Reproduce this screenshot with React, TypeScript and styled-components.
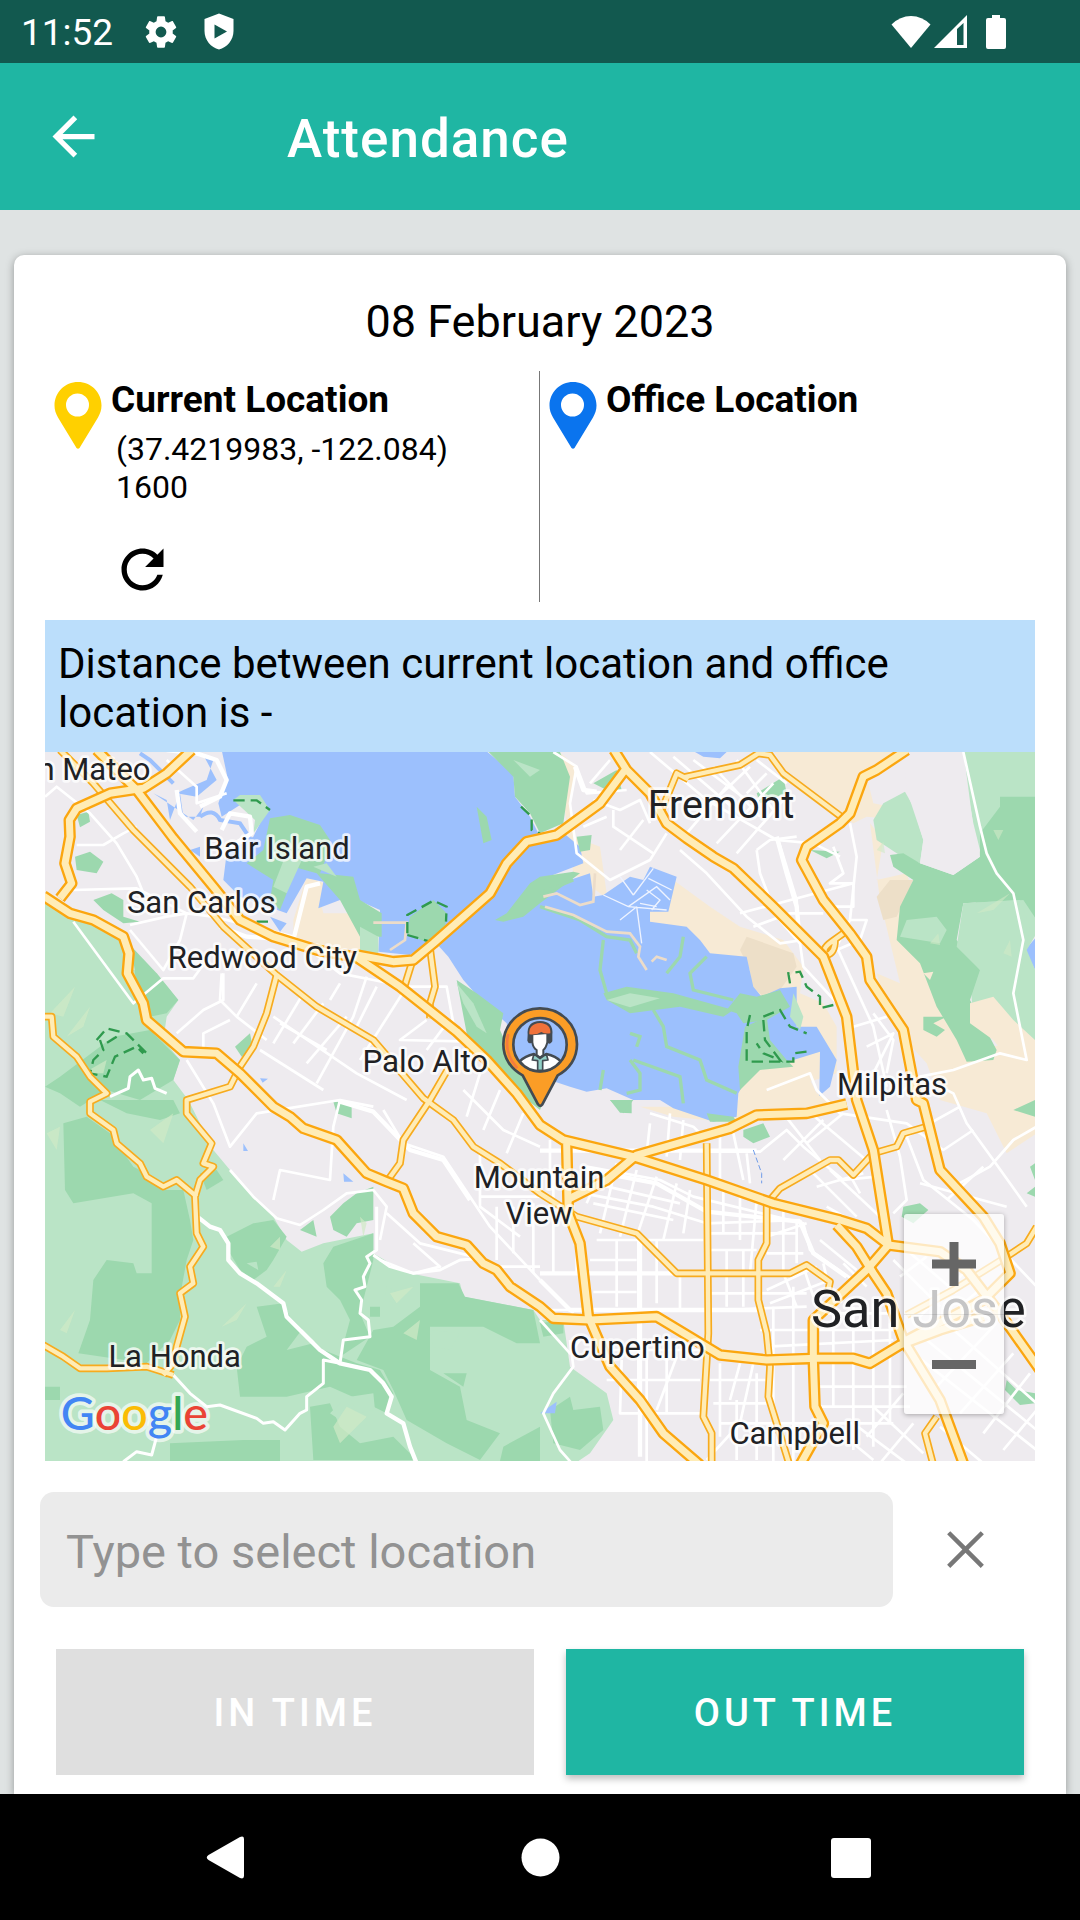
import React, { useState } from "react";
import styled, { createGlobalStyle } from "styled-components";

const GlobalStyle = createGlobalStyle`
  *, *::before, *::after { box-sizing: border-box; }
  body {
    margin: 0;
    background: #dfe3e3;
    font-family: Roboto, "Noto Sans", "Liberation Sans", sans-serif;
    color: #000;
  }
  button, input { font-family: inherit; }
`;

const Screen = styled.div`
  min-height: 100vh;
  display: flex;
  flex-direction: column;
`;

const StatusBar = styled.div`
  height: 63px;
  padding: 0 74px 0 21px;
  display: flex;
  align-items: center;
  justify-content: space-between;
  background: #12594f;
  color: #fff;
`;

const StatusGroup = styled.div<{ $gap: number }>`
  display: flex;
  align-items: center;
  gap: ${(p) => p.$gap}px;
`;

const Clock = styled.span`
  font-size: 37px;
  line-height: 44px;
  margin-right: 5px;
  padding-top: 2px;
`;

const AppBar = styled.header`
  height: 147px;
  padding: 0 42px;
  display: flex;
  align-items: center;
  gap: 182px;
  background: #1fb6a3;
  color: #fff;
`;

const Title = styled.h1`
  margin: 0;
  padding-top: 4px;
  font-size: 53px;
  line-height: 64px;
  font-weight: 500;
  letter-spacing: 1px;
`;

const IconButton = styled.button<{ $color: string }>`
  width: 63px;
  height: 63px;
  padding: 0;
  border: 0;
  background: none;
  color: ${(p) => p.$color};
  display: block;
  cursor: pointer;
  svg { display: block; }
`;

const Main = styled.main`
  flex: 1;
  display: flex;
  padding: 45px 14px 0;
  overflow: hidden;
`;

const Card = styled.section`
  flex: 1;
  min-width: 0;
  padding: 39px 31px 19px;
  background: #fff;
  border-radius: 10px 10px 0 0;
  box-shadow: 0 2px 8px rgba(0, 0, 0, 0.34);
`;

const DateHeading = styled.h2`
  margin: 0 0 21px;
  font-size: 45px;
  line-height: 56px;
  font-weight: 400;
  text-align: center;
`;

const Locations = styled.div`
  display: grid;
  grid-template-columns: 1fr 1fr;
  height: 231px;
`;

const LocationPanel = styled.div`
  display: flex;
  align-items: flex-start;
  gap: 9px;
  padding: 11px 0 0 9px;
  &:first-child { border-right: 1px solid #777; }
  > svg { flex: none; }
`;

const LocationBody = styled.div`
  display: flex;
  flex-direction: column;
  align-items: flex-start;
`;

const LocationTitle = styled.h3`
  margin: 0 0 12px;
  font-size: 37px;
  line-height: 36px;
  font-weight: 700;
`;

const LocationText = styled.p`
  margin: 0 0 32px;
  padding-left: 5px;
  font-size: 32px;
  line-height: 38px;
`;

const Distance = styled.p`
  margin: 18px 0 0;
  padding: 19px 13px 15px;
  background: #bbdefb;
  font-size: 42px;
  line-height: 49px;
`;

const MapFrame = styled.div`
  position: relative;
  overflow: hidden;
  > svg { display: block; width: 100%; height: auto; }
`;

const MapLabel = styled.text`
  font-family: Roboto, "Noto Sans", sans-serif;
  fill: #202124;
  stroke: rgba(255, 255, 255, 0.75);
  stroke-width: 16px;
  stroke-linejoin: round;
  paint-order: stroke;
  text-anchor: middle;
`;

const GoogleMark = styled.text`
  font-family: Lato, "Open Sans", sans-serif;
  font-size: 140px;
  font-weight: 500;
  stroke: rgba(255, 255, 255, 0.65);
  stroke-width: 22px;
  stroke-linejoin: round;
  paint-order: stroke;
`;

const ZoomControl = styled.div`
  position: absolute;
  right: 31px;
  bottom: 47px;
  width: 100px;
  background: rgba(255, 255, 255, 0.74);
  border-radius: 3px;
  box-shadow: 0 1px 5px rgba(0, 0, 0, 0.3);
`;

const ZoomButton = styled.button`
  width: 100%;
  height: 100px;
  padding: 0;
  border: 0;
  background: none;
  display: grid;
  place-items: center;
  color: #666;
  cursor: pointer;
  & + & { border-top: 1px solid rgba(0, 0, 0, 0.08); }
`;

const SearchRow = styled.div`
  display: flex;
  align-items: center;
  gap: 41px;
  margin: 31px 38px 42px -5px;
`;

const SearchInput = styled.input`
  flex: 1;
  min-width: 0;
  height: 115px;
  padding: 4px 26px 0;
  border: 0;
  border-radius: 14px;
  background: #ebebeb;
  color: #222;
  font-size: 47px;
  &::placeholder { color: #929292; opacity: 1; }
`;

const Actions = styled.div`
  display: grid;
  grid-template-columns: 478fr 458fr;
  gap: 32px;
  padding: 0 11px;
`;

const ActionButton = styled.button`
  height: 126px;
  border: 0;
  padding: 2px 0 0;
  background: #1fb6a3;
  color: #fff;
  font-size: 38px;
  font-weight: 500;
  letter-spacing: 4px;
  box-shadow: 0 4px 7px rgba(0, 0, 0, 0.25);
  cursor: pointer;
  &:disabled {
    background: #dfdfdf;
    box-shadow: none;
    cursor: default;
  }
`;

const NavBar = styled.nav`
  height: 126px;
  padding: 0 194px;
  display: flex;
  align-items: center;
  justify-content: space-between;
  background: #000;
  z-index: 1;
`;

const Pin = ({ color }: { color: string }) => (
  <svg width="48" height="67" viewBox="0 0 48 67" aria-hidden="true">
    <path
      fill={color}
      fillRule="evenodd"
      d="M24 0C11 0 .5 10.400.5 23.500c0 4.500 1.300 8 3.500 12L22.500 66q1.500 1.500 3 0L44 35.500c2.200-4 3.500-7.500 3.500-12C47.500 10.400 37 0 24 0zm-.5 11.500a11.500 11.500 0 1 1 0 23 11.500 11.500 0 0 1 0-23z"
    />
  </svg>
);

const GlyphIcon = ({ d }: { d: string }) => (
  <svg width="63" height="63" viewBox="0 0 24 24" fill="currentColor" aria-hidden="true">
    <path d={d} />
  </svg>
);

const BACK = "M20 11H7.830l5.590-5.590L12 4l-8 8 8 8 1.410-1.410L7.830 13H20v-2z";
const REFRESH =
  "M17.650 6.350C16.200 4.900 14.210 4 12 4c-4.420 0-7.990 3.580-7.990 8s3.570 8 7.990 8c3.730 0 6.840-2.550 7.730-6h-2.080c-.82 2.330-3.040 4-5.650 4-3.310 0-6-2.690-6-6s2.690-6 6-6c1.660 0 3.140.69 4.220 1.780L13 11h7V4l-2.350 2.350z";
const CLOSE =
  "M19 6.200 17.800 5 12 10.800 6.200 5 5 6.200 10.800 12 5 17.800 6.200 19 12 13.200 17.800 19 19 17.800 13.200 12z";

/* Map artwork, drawn on a 2970 x 2127 sheet. */
const HIGHWAYS = [
  "M170 30L290 150L400 295L520 440L600 540L700 590L830 630L950 652L1080 740L1250 875L1340 960L1430 1060L1500 1155L1570 1200L1780 1250L2000 1320L2200 1390L2400 1440L2480 1465L2545 1515L2700 1535L2780 1590L2880 1720L3000 1890",
  "M455 30L380 100L310 145L210 160L110 205L88 240L90 290L75 370L95 430L60 475",
  "M10 468L90 520L160 540L250 590L267 640L262 700L310 790L320 840L430 935L530 940L600 1000L700 1100L750 1130L790 1165L890 1200L980 1300L1040 1325L1090 1345L1120 1420L1190 1490L1280 1515L1330 1570L1370 1590L1410 1640L1500 1700L1540 1735L1650 1740L1850 1730L2040 1845L2180 1860L2330 1855L2440 1855L2490 1870L2580 1815L2700 1770L2830 1730",
  "M950 645L1060 665L1120 660L1180 610L1350 460L1400 370L1460 305L1550 285L1680 190L1755 90",
  "M1722 30L1760 90L1830 160L1880 250L1940 295L2020 350L2080 385L2200 500L2350 650L2420 830L2450 1080L2500 1230L2545 1515L2480 1590L2320 1740L2320 1860L2325 2000L2350 2050L2280 2175",
  "M2600 30L2510 90L2470 110L2430 220L2400 250L2300 320L2285 360L2350 480L2430 580L2480 650L2490 720L2590 870L2630 1080L2650 1090L2700 1290L2830 1430L2880 1510L2910 1600L2830 1680L2600 1800",
  "M2420 1092L2300 1120L2150 1125L2070 1165L1790 1245L1700 1320L1580 1380",
  "M1580 1210L1585 1420L1620 1510L1645 1730L1710 1880L1800 1980L1870 2080L1980 2175",
  "M2390 1455L2450 1520L2500 1600L2540 1660L2590 1800L2700 1980L2770 2170",
];
const ROADS = [
  "M60 30L160 130L280 270L450 440L550 560L710 705L830 800L1000 900L1150 1075L1240 1140L1300 1220L1380 1270L1500 1360L1610 1430L1790 1480L1910 1600L2250 1600L2300 1575L2370 1625L2365 1650",
  "M1930 112L2100 75L2155 40L2190 45L2230 100L2410 235",
  "M1865 210L1910 100L1945 118",
  "M2410 580L2375 605Q2340 630 2360 645Q2385 640 2385 600",
  "M710 705L680 820L640 920L600 980L570 1040L440 1080L440 1120L515 1210L490 1270L520 1280L480 1320L465 1370L470 1480L490 1520L450 1580L460 1630L420 1660L435 1730L410 1820L400 1870L370 1905",
  "M10 830L35 830L40 890L110 950L150 1010L200 1060L150 1085L150 1120L220 1170L230 1210L300 1270L320 1310L370 1340L410 1320L470 1370",
  "M10 1815L70 1850L120 1885L200 1885L320 1880L400 1905",
  "M1115 670L1090 750",
  "M1170 625L1185 740L1170 790L1170 835",
  "M1225 985L1170 1080L1090 1200L1080 1270L1040 1325",
  "M2000 1210L2005 1780L1990 2030L2015 2080L2015 2180",
  "M2180 1385L2180 1510L2155 1560L2155 1680L2180 1780L2190 1880L2185 1970L2210 2050L2250 2180",
  "M2190 1380L2220 1345L2370 1260L2395 1260L2440 1305L2500 1240L2570 1220L2590 1180L2660 1160",
  "M2600 1725L2740 1650L2900 1550L2960 1510L2990 1460",
  "M2690 2030L2655 2080L2680 2175",
];
const STREETS = [
  "M15 170L50 140L150 220L230 310L290 410L310 460",
  "M110 315L190 315L250 280L290 260",
  "M100 450L290 445L440 520L520 530",
  "M380 60L470 140L470 190L560 160",
  "M100 545L280 790L370 715L460 715L500 660",
  "M270 555L380 530L440 520L420 600L370 690L270 570",
  "M520 530L760 590L900 700L1000 720L1100 740L1220 740L1240 850",
  "M545 700L540 780L590 830L680 900M650 730L590 830M700 830L950 1000L1100 1080",
  "M790 760L700 910M850 790L760 910M920 830L800 970M980 710L940 830L830 1030M1010 740L950 860M900 730L870 780",
  "M720 850L860 930M660 930L850 1050M1100 740L960 960M1160 840L1080 900L1300 905M1220 850L1160 930",
  "M410 880L490 810L550 780L550 700M490 940L490 880L570 840",
  "M440 960L520 1090L570 1220L650 1120L900 1080L880 1160L870 1320L720 1290L700 1380",
  "M570 1290L640 1370L710 1435L780 1455L850 1410L920 1360L1000 1350L1040 1400L1020 1500",
  "M1000 1100L900 1080M1030 1110L1090 1210L1210 1250L1350 1460L1500 1620M1040 1420L1140 1510L1300 1550",
  "M1120 1510L1200 1580L1120 1600L1020 1560M1270 1050L1390 1170L1500 1220M1320 1000L1280 1130M1380 1050L1330 1170M1450 1120L1400 1240",
  "M1320 1240L1320 1400L1440 1490M1320 1370H1500M1370 1400V1560M1420 1400V1540M1480 1390V1600M1340 1580H1500",
  "M1540 36L1610 80L1640 160L1760 150M1610 80L1590 190L1610 340L1710 420L1830 360L1880 280",
  "M1710 60L1650 130M1660 180L1740 210L1800 180L1830 250M1720 210L1720 260L1840 340M1740 330L1810 240M1630 260L1700 230",
  "M1830 36L2000 180L2210 300L2320 310L2400 350M1900 50L2110 230M1960 60L2120 180M2020 80L2160 230M2090 60L2200 210M2150 60L2240 130",
  "M2120 160L2180 100M1960 240L2130 80M1940 280L2060 140M2030 310L2200 130M2090 340L2230 180",
  "M2150 330L2190 300L2270 290M2150 330L2160 400L2210 530L2280 610L2290 680L2410 810M2215 300L2270 480L2280 600",
  "M1920 330L2000 400L2120 530L2220 610L2290 600M2100 520L2440 430M2140 560L2250 520L2350 520M2380 320L2410 400L2370 430L2440 430L2440 500L2360 500",
  "M2430 250L2450 350L2430 540L2390 620L2500 860L2540 1040M2430 540L2480 540L2460 600L2390 630M2440 860L2540 830M2480 920L2560 880L2500 1000M2500 820L2560 900L2540 1000",
  "M2770 36L2820 260L2840 340L2870 400L2920 460L2950 600L2920 760L2960 960L2880 940L2740 990L2640 1010L2580 1060",
  "M2180 1050L2310 1000L2330 1050L2400 1120L2600 1150L2710 1230L2800 1170",
  "M2640 1010L2740 1060L2780 1150L2860 1260L2960 1400M2990 1160L2920 1200L2850 1280L2740 1340M2760 1100L2580 1200M2640 1330L2900 1400",
  "M2600 1190L2650 1320L2800 1440L2990 1640M2540 1110L2580 1250L2600 1380L2560 1420M2830 1280L2720 1380",
  "M1500 1600H1900M1500 1710H2050L2300 1700M1530 1200V1320M1540 1300L1540 1600M1500 1620L1600 1720M1610 1500V1600",
  "M1660 1656H1790M1670 1500H1990M1650 1560H1790M1795 1490V1980M1730 1500V1700M1850 1500V1690",
  "M1920 1610V1710M1880 1830V2020M1820 1820V2170M1745 1860L1740 2020H2000M1690 1830H1990M1700 1920H1980M1910 1850L1850 2010",
  "M1640 1280L1860 1320L1960 1370L2290 1450L2310 1530L2440 1620M1630 1360L1840 1400L2000 1450L2280 1440",
  "M1730 1270L1680 1480M1790 1290L1740 1490M1850 1310L1790 1490M1910 1330L1870 1500M1950 1350L1930 1480M1680 1300L1640 1390",
  "M1660 1330L1920 1390M1660 1390L1900 1440M1830 1150L1820 1240M1830 1120L1960 1160L2000 1200M1890 1120L1880 1250M1930 1140L1920 1260",
  "M2010 1235H2160L2240 1170L2290 1220L2410 1320L2510 1310M2040 1180V1320M2080 1180L2110 1320M2120 1240L2130 1330",
  "M2230 1120L2340 1260M2300 1110L2490 1270M2350 1140L2230 1260M2410 1120L2300 1210M2370 1290L2520 1430M2410 1270L2460 1360M2320 1300L2450 1430M2330 1340L2470 1300",
  "M2020 1340L2150 1380L2130 1600M2050 1350V1480M2100 1360V1500M2010 1480H2270M2010 1530H2150M2060 1530V1700M2110 1530V1700M2010 1660H2300",
  "M2230 1390V1600M2270 1440V1570M2180 1490L2300 1450M2180 1540H2290M2200 1700V2170M2260 1640V2170M2160 1770H2590M2180 1820L2560 1800M2380 1710V2000M2440 1700V2130M2500 1690V2120M2550 1750V2050",
  "M2180 1650L2330 1580M2190 1690L2370 1620M2230 1600L2270 1700M2290 1580L2320 1670M2350 1570L2380 1700M2360 1720H2580",
  "M2040 1870V2090M2100 1870L2070 1980M2140 1870L2100 2050L2000 2160M2010 1920H2180M2020 1990H2180M2040 2050H2560M2090 1980V2160M2150 1900V2160",
  "M2330 1940H2600M2330 2000H2610M2380 2060L2500 2160M2440 2050L2600 2170M2500 2000L2650 2140M2590 1960L2480 2090M2620 2050L2520 2170",
  "M2620 1840L2990 2130M2660 1800L2990 2070M2730 1760L2990 1990M2690 1940L2860 1760M2760 2020L2920 1840M2830 2080L2970 1900M2890 2130L2990 2010M2700 2060L2830 2170",
  "M2560 1560L2700 1700M2600 1530L2750 1660M2640 1730L2770 1600M2710 1740L2830 1640M2580 1610L2660 1550M2500 1480L2360 1400M2450 1590L2340 1500M2480 1640L2410 1570",
  "M1590 1800L1600 1880L1540 1960L1510 2020L1560 2130L1600 2175M1500 1740L1590 1840L1620 1800",
];
const LABELS: Array<[string, number, number, number]> = [
  ["n Mateo", 162, 120, 93],
  ["Bair Island", 711, 357, 93],
  ["San Carlos", 484, 520, 93],
  ["Redwood City", 667, 683, 93],
  ["Palo Alto", 1156, 997, 94],
  ["Fremont", 2043, 235, 118],
  ["Milpitas", 2556, 1065, 93],
  ["Mountain", 1497, 1343, 93],
  ["View", 1497, 1453, 93],
  ["La Honda", 404, 1880, 93],
  ["Cupertino", 1792, 1853, 93],
  ["Campbell", 2264, 2112, 93],
  ["San Jose", 2635, 1762, 157],
];

const LIGHT = "#bae4c6";
const DARK = "#9cd8ae";
const WATER = "#9cc0fd";
const SAND = "#f7ead5";

const MapArt = () => (
  <svg viewBox="15 36 2970 2127" role="img" aria-label="Map of the southern San Francisco Bay">
    <rect x="0" y="0" width="3000" height="2200" fill="#eeebef" />

    {/* sand and salt flats */}
    <g fill={SAND}>
      <path d="M1550 30L1610 80L1590 180L1600 290L1680 320L1700 460L1900 420L2010 500L2100 560L2230 600L2290 680L2280 760L2350 790L2390 860L2390 1000L2100 1090L2000 700L1600 400Z" />
      <path d="M2200 30H2570L2480 110L2500 190L2600 210L2590 240L2480 230L2440 250L2330 170L2230 80Z" />
      <path d="M2490 250L2530 300L2510 420L2600 400L2640 520L2680 640L2720 800L2780 930L2990 900V1180L2900 1240L2840 1120L2700 1080L2660 970L2560 860L2510 700L2580 730L2520 480Z" />
      <path d="M800 410L850 430L890 450L840 480L850 520L960 520L960 630L760 610L760 540Z" />
      <path d="M2070 1100L2130 1050L2300 1000L2330 1060L2390 1090L2250 1110L2090 1150L1900 1130L1800 1100Z" />
    </g>
    <path fill="#eddfc8" d="M2120 590L2260 640L2270 680L2220 750L2165 765L2135 740L2130 690L2100 630ZM2550 420L2620 420L2570 530L2530 540L2510 470Z" />

    {/* bay */}
    <path
      fill={WATER}
      d="M545 30L562 110L535 190L545 230L600 195L665 240L640 290L560 340L550 420L600 470L740 520L800 415L850 425L835 505L900 480L940 475L1020 510L1015 635L1110 645L1180 600L1225 650L1270 720L1310 765L1350 805L1400 850L1420 960L1500 1010L1590 1040L1640 1055L1700 1045L1780 1080L1860 1080L1900 1105L2020 1145L2090 1130L2095 1060L2140 980L2260 960L2340 935L2338 1068L2370 1040L2390 960L2330 860L2270 860L2270 740L2220 745L2165 770L2140 740L2120 650L2010 640L1980 600L1940 560L1830 545L1830 515L1885 515L1910 410L1830 380L1810 420L1770 410L1690 465L1660 470L1650 400L1560 430L1500 455L1500 420L1630 370L1620 320L1560 270L1500 290L1470 230L1425 170L1420 100L1335 30Z"
    />
    <path fill={WATER} d="M15 500L40 540L70 540L110 590L140 620L138 660L90 640L50 600ZM1965 36H2060L2040 55L1990 50ZM430 150L500 120L520 60L490 45L530 120L470 170L410 160ZM340 160L380 180L390 240L420 160L430 230L480 230L490 200L460 240ZM450 330L480 320L480 350ZM690 530L740 550L720 575ZM910 1300L940 1325H912ZM610 1210L624 1233H610ZM660 1015L684 1016L668 1028Z" />
    <path d="M480 230Q520 200 540 240L600 250L640 310M300 40L330 60L400 130" fill="none" stroke={WATER} strokeWidth="12" />

    {/* islands and marsh */}
    <g fill={DARK}>
      <path d="M690 235L750 225L840 255L870 300L860 350L840 400L940 410L960 480L1025 520V590L960 590L900 480L830 400L760 380L740 460L720 510L690 480L700 420L620 370L670 330Z" />
      <path d="M1340 30L1560 36L1590 110L1570 250L1500 280L1470 220L1425 170L1420 110Z" />
      <path d="M1500 410L1470 430L1400 520L1365 540L1390 545L1450 530L1500 490L1620 400L1600 395Z" />
      <path d="M1110 530L1180 480L1220 520L1215 560L1170 610L1130 595L1100 580Z" />
      <path d="M1310 200L1340 230L1355 300L1330 310Z" />
      <path d="M1250 720L1310 760L1390 820L1380 870L1420 960L1450 1010L1520 1060L1500 1110L1400 1030L1340 960L1280 880Z" />
      <path d="M1690 760L1760 740L1900 760L2080 810L2050 830L1920 800L1770 820L1700 780ZM2060 810L2100 760L2150 770L2220 750L2250 800L2180 840L2110 850L2090 820Z" />
      <path d="M2115 860L2180 830L2190 900L2240 960L2260 980L2160 990L2100 1050L2095 980Z" />
      <path d="M2000 1120L2080 1130L2090 1145H2010ZM1710 1080H1775V1120L1740 1118ZM2110 1170L2170 1150L2190 1190L2140 1210L2110 1190Z" />
      <path d="M1660 130L1730 90L1745 150L1700 150ZM2150 160L2230 110L2240 160L2160 190ZM2310 330L2400 335L2360 355ZM1610 290L1655 285L1650 330L1620 335Z" />
      <path d="M110 225L145 215L150 245L120 262ZM105 350L150 335L190 365L170 400L110 390ZM160 480L215 460L250 480L250 530L300 545L250 550L190 510ZM585 920L630 880L640 930L605 950Z" />
      <path d="M2590 1400L2640 1390L2665 1410L2620 1450L2585 1430ZM2900 1920L2930 1950L2985 1960V1990L2940 1995L2895 1950Z" />
    </g>
    <g fill={LIGHT}>
      <path d="M600 165L660 165L690 210L640 280L645 240L580 180ZM735 350L790 350L740 460L700 440ZM820 380L860 370L890 410ZM1700 780L1770 760L1860 775L1770 802ZM960 560L1015 590V640L960 635ZM2260 760L2290 830L2280 870L2250 830ZM1420 60L1500 90L1470 110Z" />
      <path d="M1250 730L1300 790L1340 880L1310 860L1270 790Z" />
    </g>
    <g fill="none" stroke={DARK} strokeWidth="10">
      <path d="M1500 500L1620 540L1700 590L1770 600L1790 640" />
      <path d="M1690 600L1680 690L1700 760M1840 810L1870 860L1880 920L1980 960L2000 1020L2090 1060M1770 960L1800 1000L1800 1050L1760 1060M1690 990L1680 1050M1930 590L1920 650L1880 700M2000 650L1950 700L1960 750L2080 780M1780 960L1920 1010L1930 1090M1770 880L1800 890L1790 920M1500 460L1600 420" />
    </g>
    <g fill="none" stroke="#ecdcc9" strokeWidth="8">
      <path d="M1510 470L1550 460L1620 495L1660 485L1665 400M1515 500L1600 525L1700 575L1770 580L1800 620L1795 650L1820 690M1835 665L1850 650L1880 660M1000 548H1100L1095 600L1050 630" />
    </g>
    <g fill="none" stroke="#eef3ff" strokeWidth="4">
      <path d="M1690 465L1765 500L1880 510M1780 465L1740 410M1780 465L1840 385M1765 500L1850 440L1890 480M1790 500L1805 610M1820 450L1860 480L1835 510M1825 415L1895 450M1800 490L1850 500M1740 540L1790 500" />
    </g>

    {/* western hills */}
    <path fill={LIGHT} d="M0 480L130 520L250 600L280 690L350 700L415 780L380 830L370 900L420 960L400 1020L445 1080L520 1230L620 1350L700 1430L740 1500L785 1535L850 1510L1000 1480L1000 1540L1050 1570L1110 1600L1260 1630L1270 1670L1480 1710L1500 1740L1570 1740L1590 1880L1700 1960L1720 2040L1650 2140L1590 2180H0Z" />
    <g fill={DARK}>
      <path d="M275 620L350 700L415 780L380 820L330 830L290 740Z" />
      <path d="M15 1040L60 1010L140 950L220 890L330 870L420 960L400 1020L300 1080L200 1050L120 1100L60 1060Z" />
      <path d="M70 1150L140 1130L210 1180L280 1280L340 1310L370 1350L430 1350L450 1440L460 1500L440 1560L420 1670L420 1740L390 1800L320 1870L115 1840L150 1740L160 1620L200 1560L280 1570L290 1600L335 1600L335 1390L280 1360L100 1390L75 1350Z" />
      <path d="M180 1080L400 1080L420 1120L360 1140L260 1120ZM480 1300L530 1290L550 1320L500 1350Z" />
      <path d="M560 1490L640 1450L700 1440L740 1490L700 1560L680 1590L640 1620L600 1590L570 1540Z" />
      <path d="M850 1570L880 1520L1000 1480V1560L980 1640L960 1720L990 1790L900 1850L930 1740L900 1680L860 1640Z" />
      <path d="M650 1700L730 1690L750 1730L850 1830L950 1870L1020 1890L1060 1960L1040 2020L960 1980L870 1940L740 1970L600 1970L590 1880L620 1820L680 1790Z" />
      <path d="M1000 1770L1060 1760L1140 1700V1630H1255L1275 1670L1480 1710L1500 1810L1430 1810L1330 1760L1170 1760L1170 1890L1260 1940L1280 2040L1380 2080L1320 2160L1220 2110L1100 2040L1060 1950L1030 1890L950 1860Z" />
      <path d="M390 2110L610 2100L720 2100L720 2170H390ZM810 2000L870 1990L900 2060L960 2110L1060 2090L1130 2160H820Z" />
      <path d="M870 1430L910 1390L950 1360L1000 1340L1000 1440L950 1450L920 1490L880 1470ZM780 1470L820 1440L830 1490Z" />
      <path d="M1530 2010L1590 1970L1600 2010L1680 2000L1690 2070L1620 2130L1540 2110ZM1500 1750L1570 1740V1780L1510 1790ZM1710 1080H1780L1750 1120ZM880 1085H935V1135L890 1120Z" />
      <path d="M990 1700H1020V1730H990ZM1390 2120L1500 2060V2163H1380ZM1270 1940L1210 1900H1280ZM15 1940H60V1980H15Z" />
    </g>
    <path fill={LIGHT} d="M740 1830L800 1750L835 1790L820 1810ZM930 1970L1000 1960L1005 2010L950 2020ZM620 1570L650 1565L655 1590ZM1040 1640L1080 1660L1070 1690L1035 1680ZM1170 1770L1260 1780L1230 1830L1180 1820ZM870 2020L910 1980L960 2030L930 2060Z" />
    <path fill={WATER} d="M1500 2020L1550 1985L1545 2020ZM2990 590L2955 630L2990 700Z" />
    <g fill="#d0eac6" opacity="0.7">
      <path d="M30 820L105 740L70 830ZM80 890L150 800L130 860ZM130 1000L200 960L190 1000ZM330 1170L400 1120L370 1210ZM880 2060L920 2000L980 2030L900 2110ZM1090 1780L1140 1740L1130 1800ZM545 1760L620 1690L590 1740ZM700 1640L740 1590L720 1640ZM60 1770L105 1710L80 1780ZM1050 1660L1120 1640L1070 1690ZM690 1520L720 1490V1530ZM20 1180L60 1160L50 1230ZM960 1430L980 1450L970 1490Z" />
    </g>

    {/* eastern hills */}
    <path fill={LIGHT} d="M2770 30H2990V580L2960 630L2990 700V900L2950 930L2900 860L2800 850L2790 700L2820 330L2800 250L2780 140Z" />
    <path fill={LIGHT} d="M2500 240L2530 190L2595 155L2620 200L2650 300L2640 370L2570 340L2510 300Z" />
    <path fill={DARK} d="M2550 345L2590 340L2640 370L2740 405L2820 350L2820 280L2880 200L2880 170H2990V540L2950 480L2770 490L2750 600L2820 690L2790 780L2870 930L2860 960L2780 965L2750 900L2690 800L2640 670L2570 600L2580 500L2620 420L2560 380Z" />
    <path fill={LIGHT} d="M2580 590L2600 540L2690 530L2720 570L2700 610ZM2770 490L2940 480L2970 560L2940 720L2930 840L2830 790L2820 690L2750 620Z" />
    <path fill={DARK} d="M2650 830L2720 830L2680 850L2715 870L2690 890L2650 870ZM2920 1110L2985 1080V1130ZM2960 1360L2985 1340V1370ZM2970 1280L2985 1270V1320Z" />
    <path fill="#eeebef" d="M2650 300L2600 150L2590 30H2770L2800 260L2820 350L2740 405L2640 370Z" />
    <g fill="#d0eac6" opacity="0.6">
      <path d="M2510 330L2530 305L2535 340ZM2810 520L2910 460L2860 510ZM2670 610L2695 580L2700 615ZM2860 270H2890L2875 300ZM2890 640L2910 600L2915 650Z" />
    </g>
    <path fill={SAND} d="M2790 790L2860 770L2920 840L2985 900V990L2900 950L2860 900L2790 850ZM2650 700L2680 695L2670 720Z" />

    {/* local streets */}
    <g fill="none" stroke="#fff" strokeWidth="8" strokeLinejoin="round">
      {STREETS.map((d) => (
        <path key={d} d={d} />
      ))}
    </g>
    <g fill="none" stroke="#fff" strokeWidth="13" strokeLinejoin="round">
      <path d="M470 1370L472 1430L510 1460L540 1470L565 1510V1560L600 1600L650 1630L730 1690L740 1730L840 1830L900 1870L990 1890L1030 1930L1055 1970L1040 2020L1090 2050L1110 2120L1130 2170" />
      <path d="M380 30L470 40L530 60L560 120L540 170L480 200M410 150L420 220L470 275" />
      <path d="M545 270L570 220L630 230L635 280L570 320" />
      <path d="M540 560L620 590L760 600L800 440L840 430M2210 290L2240 400L2270 500L2280 610M1605 80L1630 150L1670 155M900 1085L1000 1115L1110 1230L1210 1260L1290 1380" />
      <path d="M1500 1232H2150M1640 1290L1850 1330L2000 1415L2280 1445L2320 1540L2420 1610M1500 1600H1910M1800 1500V2150M1500 1620L1590 1710H2160" />
    </g>
    <g fill="none" stroke="#fff" strokeWidth="9" strokeLinejoin="round">
      <path d="M400 1905L450 1960L500 2000L540 1995L650 2035L670 2050L700 2045L735 2070L780 2020L800 2010L800 1970L850 1930V1860L900 1870L910 1800L990 1790L985 1740L960 1720L965 1680L945 1650L975 1640L970 1610L990 1570L980 1550L1010 1530L1010 1400" />
      <path d="M250 2165L290 2135L335 2145L350 2090M210 1070L265 1045L270 1010L295 990L310 1020L335 1015L345 1045L380 1060M1000 1545L1050 1580L1120 1600L1200 1590L1260 1560L1330 1555" />
    </g>

    {/* trails */}
    <g fill="none" stroke="#2f9a4e" strokeWidth="7" strokeDasharray="34 18">
      <path d="M580 181H650L690 210M1102 580V525L1180 482L1220 500L1218 545M1102 585L1170 605M650 545H700M1443 200L1475 230L1475 270L1500 280M170 900L200 865L260 880L300 920L330 950M180 900L190 930L160 960L150 1000L200 1010L225 950L290 920L310 940M230 890L190 915" />
      <path d="M2130 825L2120 870V965H2260V940L2300 935M2170 830L2220 810L2250 860L2300 880M2170 840L2175 900L2220 960L2170 940L2150 910M2250 730L2245 700L2280 695L2300 740L2340 770L2340 805L2380 795" />
    </g>
    <path d="M2140 1230L2165 1300V1330" fill="none" stroke="#6f9be8" strokeWidth="3" strokeDasharray="16 8" />

    {/* main roads */}
    <g fill="none" strokeLinejoin="round">
      <g stroke="#f7ab1e" strokeWidth="23">
        {ROADS.map((d) => (
          <path key={d} d={d} />
        ))}
      </g>
      <g stroke="#ffecb6" strokeWidth="13">
        {ROADS.map((d) => (
          <path key={d} d={d} />
        ))}
      </g>
      <g stroke="#fba60f" strokeWidth="35">
        {HIGHWAYS.map((d) => (
          <path key={d} d={d} />
        ))}
      </g>
      <g stroke="#ffecb6" strokeWidth="21">
        {HIGHWAYS.map((d) => (
          <path key={d} d={d} />
        ))}
      </g>
    </g>

    {LABELS.map(([name, x, y, size]) => (
      <MapLabel key={name} x={x} y={y} fontSize={size}>
        {name}
      </MapLabel>
    ))}

    <GoogleMark x="62" y="2070">
      <tspan fill="#4285f4">G</tspan>
      <tspan fill="#ea4335">o</tspan>
      <tspan fill="#fbbc05">o</tspan>
      <tspan fill="#4285f4">g</tspan>
      <tspan fill="#34a853">l</tspan>
      <tspan fill="#ea4335">e</tspan>
    </GoogleMark>

    {/* employee marker */}
    <g transform="translate(1320 750)" strokeLinejoin="round" strokeLinecap="round">
      <path
        fill="#fb9d26"
        fillRule="evenodd"
        stroke="#434b52"
        strokeWidth="8"
        d="M180 55C118 55 70 103 70 163C70 205 94 238 128 256L174 343Q180 352 187 343L233 256C268 238 291 205 291 163C291 103 242 55 180 55ZM180 84A80 80 0 1 1 180 244A80 80 0 1 1 180 84Z"
      />
      <path fill="none" stroke="#f47c3f" strokeWidth="8" d="M84 135Q72 190 110 232" />
      <path fill="#fff" stroke="#434b52" strokeWidth="7" d="M119 214Q135 198 162 192L180 204L199 192Q228 198 242 214Q218 243 180 244Q142 243 119 214Z" />
      <path fill="#434b52" d="M143 134Q140 94 180 93Q221 94 217 134V154Q210 166 203 158H156Q146 164 142 152Z" />
      <path fill="#fff" stroke="#434b52" strokeWidth="6" d="M157 133L202 129V157Q198 174 190 180V194L180 203L170 194V180Q159 173 157 157Z" />
      <path fill="#f0723b" d="M148 133Q146 101 180 99Q213 101 211 130Q193 132 184 126Q168 136 148 133Z" />
      <path fill="#8fd0c7" stroke="#434b52" strokeWidth="5" d="M162 192L180 206L199 192L204 210L188 212V241H173V212L157 210Z" />
    </g>
  </svg>
);

export default function App() {
  const [query, setQuery] = useState("");

  return (
    <>
      <GlobalStyle />
      <Screen>
        <StatusBar>
          <StatusGroup $gap={27}>
            <Clock>11:52</Clock>
            <svg width="32" height="34" viewBox="2.2 2 19.6 20" fill="#fff" aria-hidden="true">
              <path d="M19.140 12.940c.04-.3.060-.61.060-.94 0-.32-.020-.64-.070-.94l2.030-1.580c.18-.14.23-.41.12-.61l-1.920-3.320c-.12-.22-.37-.29-.59-.22l-2.390.96c-.5-.38-1.030-.7-1.620-.94l-.36-2.540c-.04-.24-.24-.41-.48-.41h-3.840c-.24 0-.43.17-.47.41l-.36 2.540c-.59.24-1.130.57-1.620.94l-2.390-.96c-.22-.08-.47 0-.59.22L2.740 8.870c-.12.21-.08.47.12.61l2.030 1.580c-.05.3-.09.63-.09.94s.02.64.07.94l-2.030 1.580c-.18.14-.23.41-.12.61l1.920 3.320c.12.22.37.29.59.22l2.390-.96c.5.38 1.030.7 1.620.94l.36 2.540c.05.24.24.41.48.41h3.840c.24 0 .44-.17.47-.41l.36-2.540c.59-.24 1.130-.56 1.620-.94l2.390.96c.22.08.47 0 .59-.22l1.920-3.320c.12-.22.070-.47-.12-.61l-2.010-1.580zM12 15.300a3.300 3.300 0 1 1 0-6.600 3.300 3.300 0 0 1 0 6.600z" />
            </svg>
            <svg width="30" height="37" viewBox="0 0 30 37" aria-hidden="true">
              <path fill="#fff" fillRule="evenodd" d="M15 .5L29.500 6V18C29.500 27 23 34.500 15 36.500C7 34.500.5 27 .5 18V6ZM10.500 11.500V25.500L23 18.500Z" />
            </svg>
          </StatusGroup>
          <StatusGroup $gap={3}>
            <svg width="40" height="34" viewBox="0 0 40 34" fill="#fff" aria-hidden="true">
              <path d="M20 33L.5 9.500Q9 1 20 1T39.500 9.500Z" />
            </svg>
            <svg width="33" height="33" viewBox="0 0 33 33" aria-hidden="true">
              <path fill="#fff" fillRule="evenodd" d="M0 33L33 0V33ZM23 14V30H29.500V8Z" />
            </svg>
            <svg width="36" height="34" viewBox="-16 0 36 34" fill="#fff" aria-hidden="true">
              <path d="M6 0H14V3H18Q20 3 20 5V32Q20 34 18 34H2Q0 34 0 32V5Q0 3 2 3H6Z" />
            </svg>
          </StatusGroup>
        </StatusBar>

        <AppBar>
          <IconButton type="button" aria-label="Back" $color="#fff">
            <GlyphIcon d={BACK} />
          </IconButton>
          <Title>Attendance</Title>
        </AppBar>

        <Main>
          <Card>
            <DateHeading>08 February 2023</DateHeading>

            <Locations>
              <LocationPanel>
                <Pin color="#ffd000" />
                <LocationBody>
                  <LocationTitle>Current Location</LocationTitle>
                  <LocationText>
                    (37.4219983, -122.084)
                    <br />
                    1600
                  </LocationText>
                  <IconButton type="button" aria-label="Refresh location" $color="#000">
                    <GlyphIcon d={REFRESH} />
                  </IconButton>
                </LocationBody>
              </LocationPanel>
              <LocationPanel>
                <Pin color="#0a74ee" />
                <LocationBody>
                  <LocationTitle>Office Location</LocationTitle>
                </LocationBody>
              </LocationPanel>
            </Locations>

            <Distance>Distance between current location and office location is -</Distance>

            <MapFrame>
              <MapArt />
              <ZoomControl>
                <ZoomButton type="button" aria-label="Zoom in">
                  <svg width="44" height="44" viewBox="0 0 44 44" fill="currentColor" aria-hidden="true">
                    <path d="M17.500 0H26.500V17.500H44V26.500H26.500V44H17.500V26.500H0V17.500H17.500Z" />
                  </svg>
                </ZoomButton>
                <ZoomButton type="button" aria-label="Zoom out">
                  <svg width="44" height="9" viewBox="0 0 44 9" fill="currentColor" aria-hidden="true">
                    <path d="M0 0H44V9H0Z" />
                  </svg>
                </ZoomButton>
              </ZoomControl>
            </MapFrame>

            <SearchRow>
              <SearchInput
                type="text"
                aria-label="Location"
                placeholder="Type to select location"
                value={query}
                onChange={(e) => setQuery(e.target.value)}
              />
              <IconButton type="button" aria-label="Clear" $color="#777" onClick={() => setQuery("")}>
                <GlyphIcon d={CLOSE} />
              </IconButton>
            </SearchRow>

            <Actions>
              <ActionButton type="button" disabled>
                IN TIME
              </ActionButton>
              <ActionButton type="button">OUT TIME</ActionButton>
            </Actions>
          </Card>
        </Main>

        <NavBar aria-label="System navigation">
          <IconButton type="button" aria-label="System back" $color="#fff">
            <svg width="63" height="63" viewBox="0 0 63 63" fill="currentColor" aria-hidden="true">
              <path d="M14.500 29L46 11Q50 9.500 50 13V50Q50 53.500 46 52L14.500 34Q11 31.500 14.500 29Z" />
            </svg>
          </IconButton>
          <IconButton type="button" aria-label="Home" $color="#fff">
            <svg width="63" height="63" viewBox="0 0 63 63" fill="currentColor" aria-hidden="true">
              <circle cx="31.500" cy="31.500" r="19" />
            </svg>
          </IconButton>
          <IconButton type="button" aria-label="Recent apps" $color="#fff">
            <svg width="63" height="63" viewBox="0 0 63 63" fill="currentColor" aria-hidden="true">
              <rect x="8" y="12" width="40" height="40" rx="3" />
            </svg>
          </IconButton>
        </NavBar>
      </Screen>
    </>
  );
}
